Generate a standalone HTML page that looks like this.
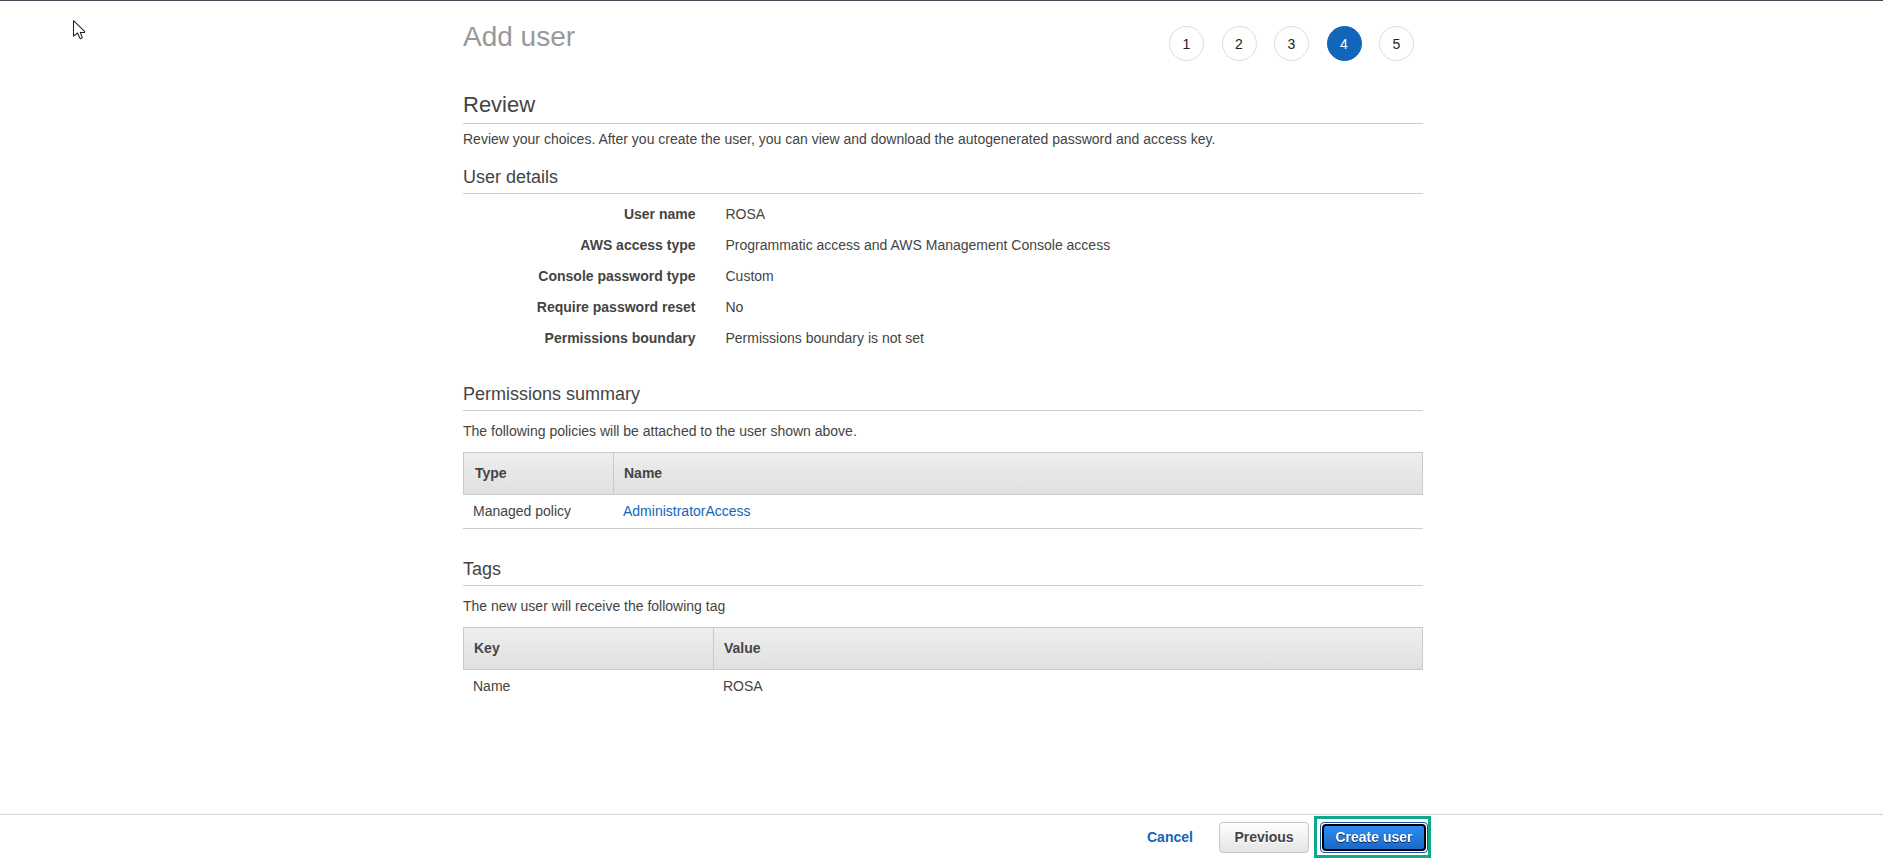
<!DOCTYPE html>
<html lang="en">
<head>
<meta charset="utf-8">
<title>IAM Management Console</title>
<style>
html,body{margin:0;padding:0;background:#fff;}
body{width:1883px;height:858px;position:relative;overflow:hidden;font-family:"Liberation Sans",Arial,sans-serif;font-size:14px;color:#444;}
.abs{position:absolute;white-space:nowrap;}
.topline{left:0;top:0;width:1883px;height:1px;background:#414853;}
h1,h2,h3{margin:0;font-weight:normal;}
.title{left:463px;top:21px;font-size:28px;line-height:32px;color:#999;}
.h2{left:463px;font-size:22px;line-height:26px;color:#444;}
.h3{left:463px;font-size:18px;line-height:22px;color:#444;}
.hr{left:463px;width:960px;height:1px;background:#ccc;}
.p{left:463px;font-size:14px;line-height:18px;color:#444;}
.lbl{left:463px;width:232.5px;text-align:right;font-weight:bold;font-size:14px;line-height:18px;color:#444;}
.val{left:725.5px;font-size:14px;line-height:18px;color:#444;}
.step{width:33px;height:33px;border:1px solid #ddd;border-radius:50%;top:26px;text-align:center;line-height:34px;font-size:14px;color:#222;background:#fff;box-sizing:content-box;}
.step.on{background:#1166bb;border-color:#1166bb;color:#fff;}
.thead{left:463px;width:958px;height:41px;border:1px solid #c9c9c9;background:linear-gradient(#eeeeee,#e0e0e0);}
.th{font-weight:bold;font-size:14px;line-height:18px;color:#444;}
.vdiv{width:1px;height:41px;background:#c9c9c9;}
.td{font-size:14px;line-height:18px;color:#444;}
a{color:#1166bb;text-decoration:none;}
.footline{left:0;top:813px;width:1883px;height:2px;background:linear-gradient(#fbfbfb 0,#fbfbfb 1px,#d5d5d5 1px,#d5d5d5 2px);}
.btn{box-sizing:border-box;height:31px;border-radius:4px;font-weight:bold;font-size:14px;line-height:29px;text-align:center;}
.prev{left:1219px;top:822px;width:90px;border:1px solid #c5c5c5;background:linear-gradient(#fefefe,#e4e4e4);color:#444;text-shadow:0 1px 0 #fff;}
.cancel{left:1147px;top:828px;font-weight:bold;font-size:14px;line-height:18px;color:#1166bb;}
.green{left:1314px;top:816px;width:117px;height:42px;box-sizing:border-box;border:3px solid #10a88a;}
.create{left:1320px;top:822px;width:108px;border:1px solid #1a4f9c;background:#fff;padding:1px;}
.create i{display:block;will-change:transform;font-style:normal;box-sizing:border-box;height:27px;border:2px solid #000;border-radius:4px;background:linear-gradient(#2d8cef,#1969c9);color:#fff;line-height:23px;text-shadow:0 1px 0 rgba(0,10,45,.75);}
</style>
</head>
<body>
<div class="abs topline"></div>
<svg class="abs" style="left:72px;top:19px" width="16" height="22" viewBox="0 0 16 22"><path d="M1.5 1.6 L1.5 17.2 L5.5 14 L7.9 19.2 Q9 20.3 10.3 18.5 L8.3 13.5 L12.6 13.5 L12.6 12.4 Z" fill="#fff" stroke="#1d2230" stroke-width="1.05" stroke-linejoin="round"/></svg>

<h1 class="abs title">Add user</h1>

<div class="abs step" style="left:1169px">1</div>
<div class="abs step" style="left:1221.5px">2</div>
<div class="abs step" style="left:1274px">3</div>
<div class="abs step on" style="left:1326.5px">4</div>
<div class="abs step" style="left:1379px">5</div>

<h2 class="abs h2" style="top:92px">Review</h2>
<div class="abs hr" style="top:123px"></div>
<div class="abs p" style="top:130px">Review your choices. After you create the user, you can view and download the autogenerated password and access key.</div>

<h3 class="abs h3" style="top:166px">User details</h3>
<div class="abs hr" style="top:193px"></div>

<div class="abs lbl" style="top:205px">User name</div><div class="abs val" style="top:205px">ROSA</div>
<div class="abs lbl" style="top:236px">AWS access type</div><div class="abs val" style="top:236px">Programmatic access and AWS Management Console access</div>
<div class="abs lbl" style="top:267px">Console password type</div><div class="abs val" style="top:267px">Custom</div>
<div class="abs lbl" style="top:298px">Require password reset</div><div class="abs val" style="top:298px">No</div>
<div class="abs lbl" style="top:329px">Permissions boundary</div><div class="abs val" style="top:329px">Permissions boundary is not set</div>

<h3 class="abs h3" style="top:383px">Permissions summary</h3>
<div class="abs hr" style="top:410px"></div>
<div class="abs p" style="top:422px">The following policies will be attached to the user shown above.</div>

<div class="abs thead" style="top:452px"></div>
<div class="abs vdiv" style="left:613px;top:453px"></div>
<div class="abs th" style="left:475px;top:464px">Type</div>
<div class="abs th" style="left:624px;top:464px">Name</div>
<div class="abs td" style="left:473px;top:502px">Managed policy</div>
<div class="abs td" style="left:623px;top:502px"><a>AdministratorAccess</a></div>
<div class="abs hr" style="top:528px"></div>

<h3 class="abs h3" style="top:558px">Tags</h3>
<div class="abs hr" style="top:585px"></div>
<div class="abs p" style="top:597px">The new user will receive the following tag</div>

<div class="abs thead" style="top:627px"></div>
<div class="abs vdiv" style="left:713px;top:628px"></div>
<div class="abs th" style="left:474px;top:639px">Key</div>
<div class="abs th" style="left:724px;top:639px">Value</div>
<div class="abs td" style="left:473px;top:677px">Name</div>
<div class="abs td" style="left:723px;top:677px">ROSA</div>

<div class="abs footline"></div>
<div class="abs cancel">Cancel</div>
<div class="abs btn prev">Previous</div>
<div class="abs green"></div>
<div class="abs btn create"><i>Create user</i></div>
</body>
</html>
